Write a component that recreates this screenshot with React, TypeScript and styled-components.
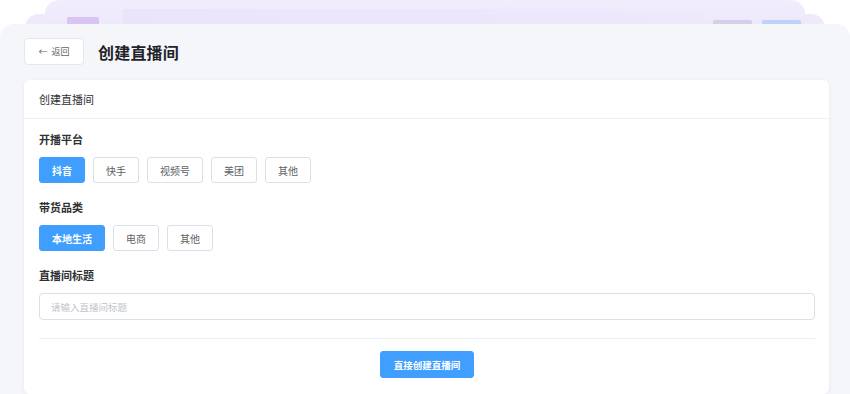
import React from 'react';
import styled, { createGlobalStyle } from 'styled-components';

const GlobalStyle = createGlobalStyle`
  html, body {
    margin: 0;
    padding: 0;
    background: #ffffff;
  }
  body {
    font-family: "Noto Sans CJK SC", "Noto Sans", Inter, sans-serif;
    color: #303133;
  }
  * {
    box-sizing: border-box;
  }
`;

const Stage = styled.div`
  position: relative;
  width: 850px;
  height: 394px;
  overflow: hidden;
  padding-top: 24px;
`;

const BackLayer = styled.div<{ $inset: number; $top: number; $bg: string }>`
  position: absolute;
  top: ${(p) => p.$top}px;
  left: ${(p) => p.$inset}px;
  right: ${(p) => p.$inset}px;
  height: 60px;
  border-radius: 14px 14px 0 0;
  background: ${(p) => p.$bg};
`;

const GhostBar = styled.div`
  position: absolute;
  top: 9px;
  left: 78px;
  right: 100px;
  height: 30px;
  background: linear-gradient(90deg, rgba(232, 222, 250, 0.55), rgba(236, 230, 251, 0.3));
`;

const GhostLogo = styled.div`
  position: absolute;
  top: 17px;
  left: 22px;
  width: 32px;
  height: 20px;
  border-radius: 2px;
  background: #d9c4f4;
`;

const GhostButton = styled.div<{ $right: number; $bg: string }>`
  position: absolute;
  top: 20px;
  right: ${(p) => p.$right}px;
  width: 39px;
  height: 20px;
  border-radius: 2px;
  background: ${(p) => p.$bg};
`;

const Panel = styled.main`
  position: relative;
  height: 100%;
  border-radius: 14px 14px 0 0;
  background: #f5f6fa;
  padding: 14px 21px 0 24px;
  display: flex;
  flex-direction: column;
  gap: 15px;
`;

const PageHeader = styled.div`
  display: flex;
  align-items: center;
  gap: 14px;
  height: 27px;
`;

const BackButton = styled.button`
  width: 60px;
  height: 27px;
  border: 1px solid #e4e7ed;
  border-radius: 4px;
  background: #ffffff;
  color: #606266;
  font-family: inherit;
  font-size: 9px;
  display: flex;
  align-items: center;
  justify-content: center;
  gap: 4px;
  padding: 0;
`;

const PageTitle = styled.h1`
  margin: 0;
  font-size: 16px;
  font-weight: 700;
  color: #1f2329;
  letter-spacing: 0.2px;
`;

const Card = styled.section`
  background: #ffffff;
  border-radius: 6px;
  box-shadow: 0 1px 4px rgba(0, 0, 0, 0.06);
  flex: 1;
`;

const CardHeader = styled.div`
  height: 39px;
  padding: 0 15px;
  display: flex;
  align-items: center;
  border-bottom: 1px solid #eef0f3;
  font-size: 11px;
  color: #303133;
`;

const CardBody = styled.div`
  padding: 12px 14px 0 15px;
  display: flex;
  flex-direction: column;
`;

const Field = styled.div`
  display: flex;
  flex-direction: column;
  gap: 9px;
  margin-bottom: 16px;
`;

const Label = styled.div`
  font-size: 11px;
  line-height: 17px;
  font-weight: 600;
  color: #303133;
`;

const Options = styled.div`
  display: flex;
  gap: 8px;
`;

const Option = styled.button<{ $active?: boolean }>`
  height: 26px;
  padding: 0 12px;
  min-width: 46px;
  border-radius: 3px;
  border: 1px solid ${(p) => (p.$active ? '#409eff' : '#dcdfe6')};
  background: ${(p) => (p.$active ? '#409eff' : '#ffffff')};
  color: ${(p) => (p.$active ? '#ffffff' : '#606266')};
  font-family: inherit;
  font-size: 10px;
  font-weight: ${(p) => (p.$active ? 600 : 400)};
`;

const TextInput = styled.input`
  height: 27px;
  width: 100%;
  border: 1px solid #dcdfe6;
  border-radius: 4px;
  padding: 0 11px;
  font-family: inherit;
  font-size: 9.5px;
  color: #606266;
  outline: none;
  &::placeholder {
    color: #c0c4cc;
  }
`;

const Divider = styled.hr`
  border: none;
  border-top: 1px solid #ebeef5;
  margin: 2px 0 12px;
`;

const Actions = styled.div`
  display: flex;
  justify-content: center;
`;

const SubmitButton = styled.button`
  width: 94px;
  height: 27px;
  border: 1px solid #409eff;
  border-radius: 3px;
  background: #409eff;
  color: #ffffff;
  font-family: inherit;
  font-size: 9.5px;
  font-weight: 700;
  padding: 0;
`;

const platforms = ['抖音', '快手', '视频号', '美团', '其他'];
const categories = ['本地生活', '电商', '其他'];

export default function App() {
  return (
    <>
      <GlobalStyle />
      <Stage>
        <BackLayer $inset={25} $top={14} $bg="linear-gradient(180deg, #efe9fc 0%, #ece9fb 100%)" />
        <BackLayer $inset={45} $top={0} $bg="linear-gradient(180deg, #f2edfd 0%, #e7e0f9 100%)">
          <GhostBar />
          <GhostLogo />
          <GhostButton $right={53} $bg="#d5d0e7" />
          <GhostButton $right={4} $bg="#bfd0fb" />
        </BackLayer>
        <Panel>
          <PageHeader>
            <BackButton>
              <span>←</span>
              <span>返回</span>
            </BackButton>
            <PageTitle>创建直播间</PageTitle>
          </PageHeader>
          <Card>
            <CardHeader>创建直播间</CardHeader>
            <CardBody>
              <Field>
                <Label>开播平台</Label>
                <Options>
                  {platforms.map((name, i) => (
                    <Option key={name} $active={i === 0}>
                      {name}
                    </Option>
                  ))}
                </Options>
              </Field>
              <Field>
                <Label>带货品类</Label>
                <Options>
                  {categories.map((name, i) => (
                    <Option key={name} $active={i === 0}>
                      {name}
                    </Option>
                  ))}
                </Options>
              </Field>
              <Field>
                <Label>直播间标题</Label>
                <TextInput placeholder="请输入直播间标题" />
              </Field>
              <Divider />
              <Actions>
                <SubmitButton>直接创建直播间</SubmitButton>
              </Actions>
            </CardBody>
          </Card>
        </Panel>
      </Stage>
    </>
  );
}
